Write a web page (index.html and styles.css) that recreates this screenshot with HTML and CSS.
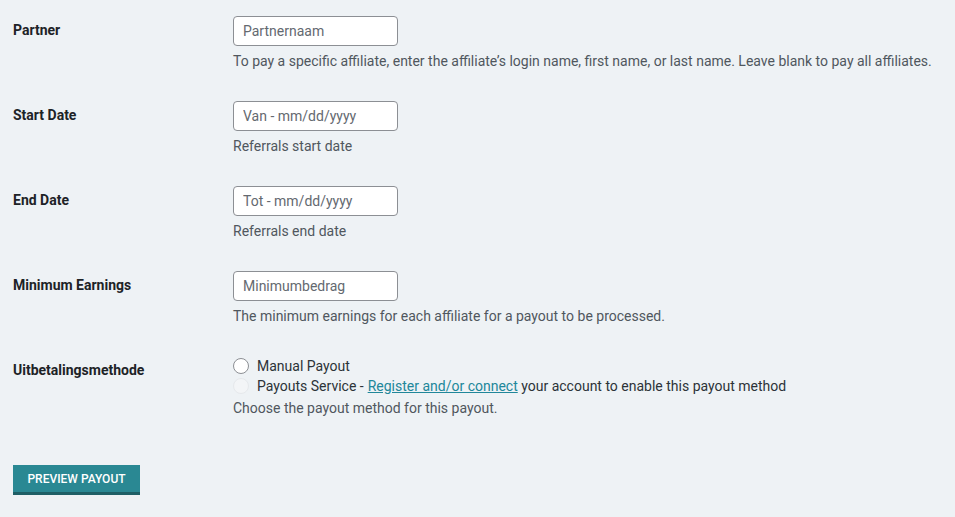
FILE: index.html
```html
<!DOCTYPE html>
<html lang="nl">
<head>
  <meta charset="UTF-8">
  <meta name="viewport" content="width=device-width, initial-scale=1">
  <title>Payout</title>
  <link rel="stylesheet" href="styles.css">
</head>
<body>
  <form class="payout-form">
    <div class="row">
      <label class="label" for="partner">Partner</label>
      <div class="field">
        <input class="text" type="text" id="partner" placeholder="Partnernaam">
        <p class="desc">To pay a specific affiliate, enter the affiliate’s login name, first name, or last name. Leave blank to pay all affiliates.</p>
      </div>
    </div>

    <div class="row">
      <label class="label" for="start">Start Date</label>
      <div class="field">
        <input class="text" type="text" id="start" placeholder="Van - mm/dd/yyyy">
        <p class="desc">Referrals start date</p>
      </div>
    </div>

    <div class="row">
      <label class="label" for="end">End Date</label>
      <div class="field">
        <input class="text" type="text" id="end" placeholder="Tot - mm/dd/yyyy">
        <p class="desc">Referrals end date</p>
      </div>
    </div>

    <div class="row">
      <label class="label" for="minimum">Minimum Earnings</label>
      <div class="field">
        <input class="text" type="text" id="minimum" placeholder="Minimumbedrag">
        <p class="desc">The minimum earnings for each affiliate for a payout to be processed.</p>
      </div>
    </div>

    <div class="row">
      <span class="label">Uitbetalingsmethode</span>
      <div class="field">
        <label class="radio"><span class="dot"></span>Manual Payout</label>
        <label class="radio"><span class="dot dot-off"></span>Payouts Service - <a href="#">Register and/or connect</a>&nbsp;your account to enable this payout method</label>
        <p class="desc">Choose the payout method for this payout.</p>
      </div>
    </div>

    <button class="btn" type="button">PREVIEW PAYOUT</button>
  </form>
</body>
</html>
```

FILE: styles.css
```css
body {
  margin: 0;
  background-color: #eef2f5;
  font-family: Roboto, "Liberation Sans", sans-serif;
  color: #2c3338;
}
.payout-form {
  padding: 0 13px;
}
.row {
  display: flex;
  padding: 16px 0 14px;
}
.label {
  width: 220px;
  flex-shrink: 0;
  font-size: 14px;
  line-height: 16px;
  font-weight: 700;
  color: #1d2327;
  padding-top: 6px;
}
.field {
  display: flex;
  flex-direction: column;
  align-items: flex-start;
}
.text {
  box-sizing: border-box;
  width: 165px;
  height: 30px;
  padding: 0 9px;
  border: 1px solid #8c8f94;
  border-radius: 4px;
  background: #fff;
  font-family: inherit;
  font-size: 14px;
  color: #2c3338;
}
.text::placeholder {
  color: #646970;
}
.desc {
  margin: 6px 0 0;
  font-size: 14px;
  line-height: 19px;
  color: #50575e;
}
.radio {
  display: flex;
  align-items: center;
  height: 20px;
  font-size: 14px;
  color: #2c3338;
}
.radio a {
  color: #21879a;
  margin-left: 4px;
}
.dot {
  box-sizing: border-box;
  width: 16px;
  height: 16px;
  border: 1px solid #8c8f94;
  border-radius: 50%;
  background: #fff;
  margin-right: 8px;
}
.dot-off {
  border-color: #e6e9ec;
  background: #f3f5f7;
}
.field .radio + .desc {
  margin-top: 3px;
}
.btn {
  margin: 33px 0 0;
  width: 127px;
  height: 30px;
  padding: 0;
  border: none;
  border-bottom: 3px solid #1f5f66;
  background: #2a8893;
  color: #fff;
  font-family: inherit;
  font-size: 12px;
  font-weight: 500;
  cursor: pointer;
}
```
